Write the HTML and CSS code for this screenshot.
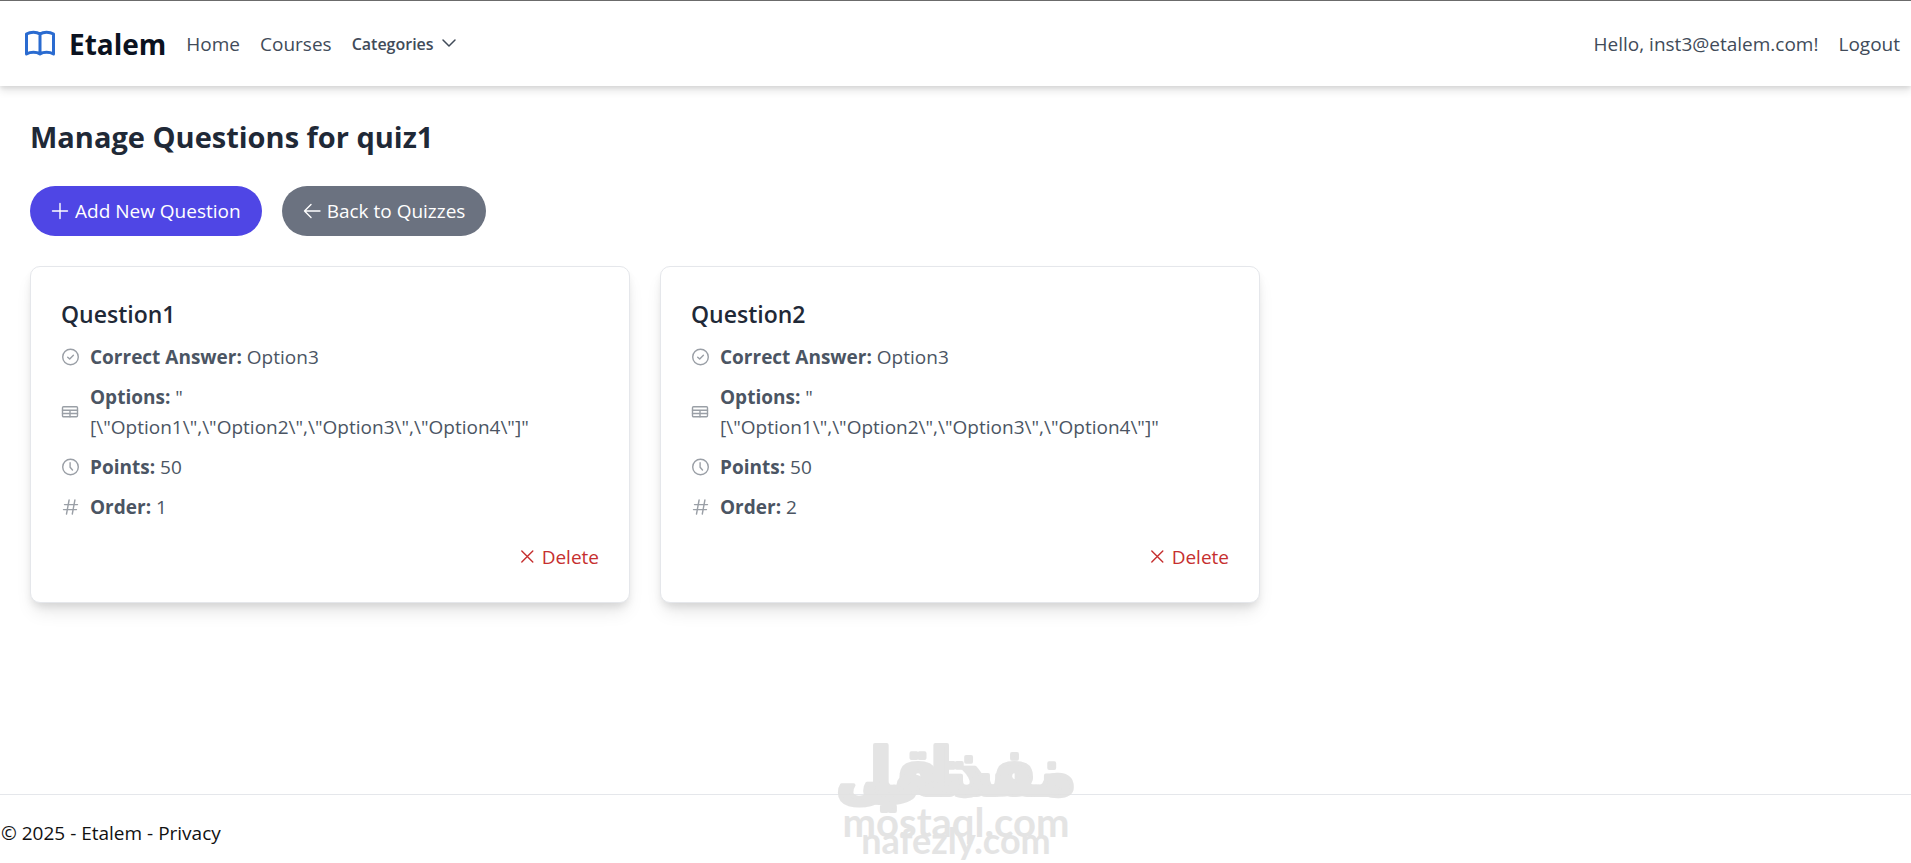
FILE: index.html
```html
<!DOCTYPE html>
<html lang="en">
<head>
  <meta charset="UTF-8">
  <meta name="viewport" content="width=device-width, initial-scale=1.0">
  <title>Manage Questions - Etalem</title>
  <link rel="stylesheet" href="styles.css">
</head>
<body>
  <!-- Shared icons -->
  <svg class="sprite" aria-hidden="true">
    <symbol id="i-check" viewBox="0 0 18 18">
      <circle cx="9.500" cy="9" r="7.800"/>
      <path d="M6.700 9.200l2 1.900 3.700-3.800"/>
    </symbol>
    <symbol id="i-table" viewBox="0 0 18 18">
      <rect x="1.500" y="3.800" width="15" height="10" rx="1"/>
      <path d="M1.500 7.200h15M1.500 10.500h15M9 7.200v6.600"/>
    </symbol>
    <symbol id="i-clock" viewBox="0 0 18 18">
      <circle cx="9.500" cy="9" r="7.800"/>
      <path d="M9.100 4.800v4.400l2.400 2.800"/>
    </symbol>
    <symbol id="i-hash" viewBox="0 0 18 18">
      <path d="M8.100 2L5.500 16M13.900 2l-2.600 14M3.500 6.600h13M2.500 11.600h13"/>
    </symbol>
    <symbol id="i-close" viewBox="0 0 18 18">
      <path d="M3.800 3l11 11M14.800 3l-11 11"/>
    </symbol>
  </svg>

  <header class="navbar">
    <a class="brand" href="#">
      <svg class="brand-icon" viewBox="0 0 32 32" aria-hidden="true">
        <path d="M16 6C12.500 3.500 6.500 3.500 2.500 6V26C6.500 23.800 12.500 23.800 16 26C19.500 23.800 25.500 23.800 29.500 26V6C25.500 3.500 19.500 3.500 16 6V26"/>
      </svg>
      Etalem
    </a>
    <nav class="nav-links">
      <a href="#">Home</a>
      <a href="#">Courses</a>
      <button class="dropdown" type="button">
        Categories
        <svg viewBox="0 0 16 16" aria-hidden="true"><path d="M2 4l6 6 6-6"/></svg>
      </button>
    </nav>
    <div class="nav-user">
      <a href="#">Hello, inst3@etalem.com!</a>
      <button type="button">Logout</button>
    </div>
  </header>

  <main>
    <h1>Manage Questions for quiz1</h1>
    <div class="actions">
      <a class="btn btn-primary" href="#">
        <svg viewBox="0 0 18 18" aria-hidden="true"><path d="M9 1.500v15M1.500 9h15"/></svg>
        Add New Question
      </a>
      <a class="btn btn-secondary" href="#">
        <svg viewBox="0 0 18 18" aria-hidden="true"><path d="M17 9H1.500M8 2.500L1.500 9 8 15.500"/></svg>
        Back to Quizzes
      </a>
    </div>

    <div class="questions">
      <section class="card">
        <h2>Question1</h2>
        <p><svg class="icon"><use href="#i-check"/></svg><span><strong>Correct Answer:</strong> Option3</span></p>
        <p><svg class="icon"><use href="#i-table"/></svg><span><strong>Options:</strong> " [\"Option1\",\"Option2\",\"Option3\",\"Option4\"]"</span></p>
        <p><svg class="icon"><use href="#i-clock"/></svg><span><strong>Points:</strong> 50</span></p>
        <p><svg class="icon"><use href="#i-hash"/></svg><span><strong>Order:</strong> 1</span></p>
        <div class="card-footer">
          <button class="delete" type="button"><svg class="icon"><use href="#i-close"/></svg>Delete</button>
        </div>
      </section>

      <section class="card">
        <h2>Question2</h2>
        <p><svg class="icon"><use href="#i-check"/></svg><span><strong>Correct Answer:</strong> Option3</span></p>
        <p><svg class="icon"><use href="#i-table"/></svg><span><strong>Options:</strong> " [\"Option1\",\"Option2\",\"Option3\",\"Option4\"]"</span></p>
        <p><svg class="icon"><use href="#i-clock"/></svg><span><strong>Points:</strong> 50</span></p>
        <p><svg class="icon"><use href="#i-hash"/></svg><span><strong>Order:</strong> 2</span></p>
        <div class="card-footer">
          <button class="delete" type="button"><svg class="icon"><use href="#i-close"/></svg>Delete</button>
        </div>
      </section>
    </div>
  </main>

  <footer>
    &copy; 2025 - Etalem - <a href="#">Privacy</a>
  </footer>

  <!-- Watermarks -->
  <svg class="watermark" viewBox="0 0 240 128" aria-hidden="true">
    <g class="mark-logo">
      <text x="120" y="60">مستقل</text>
      <text x="126" y="60">نفذلي</text>
    </g>
    <text class="mark-site" x="120" y="102">mostaql.com</text>
    <text class="mark-site small" x="120" y="119">nafezly.com</text>
  </svg>
</body>
</html>
```

FILE: styles.css
```css
* {
  box-sizing: border-box;
}
body {
  margin: 0;
  min-height: 100vh;
  display: flex;
  flex-direction: column;
  position: relative;
  font-family: "Open Sans", "Noto Sans", sans-serif;
  font-size: 19px;
  line-height: 30px;
  color: #111;
  background: #fff;
}
a {
  color: inherit;
  text-decoration: none;
}
button {
  padding: 0;
  border: none;
  background: none;
  font: inherit;
  color: inherit;
  cursor: pointer;
}
svg {
  fill: none;
  stroke: currentColor;
  stroke-linecap: round;
  stroke-linejoin: round;
  flex: none;
}
.sprite {
  position: absolute;
  width: 0;
  height: 0;
}

/* Navbar */
.navbar {
  display: flex;
  align-items: center;
  height: 86px;
  padding: 0 11px 0 24px;
  border-top: 1px solid #6b6b6b;
  color: #414b59;
  box-shadow: 0 5px 8px rgba(0,0,0,0.1), 0 2px 4px rgba(0,0,0,0.08);
}
.brand {
  display: flex;
  align-items: center;
  gap: 13px;
  margin-right: 20px;
  font-size: 28px;
  font-weight: 700;
  color: #0b1220;
}
.brand-icon {
  width: 32px;
  height: 32px;
  stroke: #2a6bd0;
  stroke-width: 3;
}
.nav-links, .nav-user {
  display: flex;
  align-items: center;
  gap: 20px;
}
.nav-user {
  margin-left: auto;
}
.dropdown {
  display: flex;
  align-items: center;
  gap: 7px;
  font-size: 16px;
  font-weight: 600;
}
.dropdown svg {
  width: 16px;
  height: 16px;
  stroke-width: 1.5;
}

/* Page */
main {
  flex: 1;
  padding: 30px 21px 30px 30px;
}
h1 {
  margin: 0 0 28px;
  font-size: 29px;
  line-height: 42px;
  font-weight: 700;
  color: #1f2937;
}
.actions {
  display: flex;
  gap: 20px;
  margin-bottom: 30px;
}
.btn {
  display: flex;
  align-items: center;
  gap: 6px;
  padding: 10px 21px;
  border-radius: 25px;
  color: #fff;
}
.btn svg {
  width: 18px;
  height: 18px;
  stroke-width: 1.4;
}
.btn-primary {
  background: #4f46e5;
}
.btn-secondary {
  background: #6b7280;
}

/* Question cards */
.questions {
  display: grid;
  grid-template-columns: repeat(3, 1fr);
  gap: 30px;
}
.card {
  padding: 30px;
  border: 1px solid #e5e7eb;
  border-radius: 10px;
  background: #fff;
  box-shadow: 0 12px 18px -4px rgba(0,0,0,0.1), 0 5px 8px -2px rgba(0,0,0,0.1);
}
.card h2 {
  margin: 0 0 10px;
  font-size: 23px;
  line-height: 35px;
  font-weight: 600;
  color: #1f2937;
}
.card p {
  display: flex;
  align-items: center;
  gap: 11px;
  margin: 0 0 10px;
  color: #4b5563;
}
.icon {
  width: 18px;
  height: 18px;
  stroke-width: 1.4;
}
.card p .icon {
  color: #9a9fa6;
}
.card-footer {
  display: flex;
  justify-content: flex-end;
  margin-top: 20px;
}
.delete {
  display: flex;
  align-items: center;
  gap: 6px;
  color: #c62f2f;
}

footer {
  padding: 23px 1px 15px;
  border-top: 1px solid #e5e7eb;
}

.watermark {
  position: absolute;
  left: 50%;
  bottom: 0;
  width: 240px;
  height: 128px;
  margin-left: -120px;
  opacity: 0.9;
  pointer-events: none;
}
.watermark text {
  fill: #e2e2e2;
  stroke: none;
  text-anchor: middle;
  font-family: "DejaVu Sans", sans-serif;
  font-weight: 700;
}
.watermark .mark-logo text {
  font-size: 66px;
  stroke: #e2e2e2;
  stroke-width: 4;
}
.watermark .mark-site {
  font-family: Lato, sans-serif;
  font-size: 40px;
}
.watermark .small {
  font-size: 36px;
}
```
